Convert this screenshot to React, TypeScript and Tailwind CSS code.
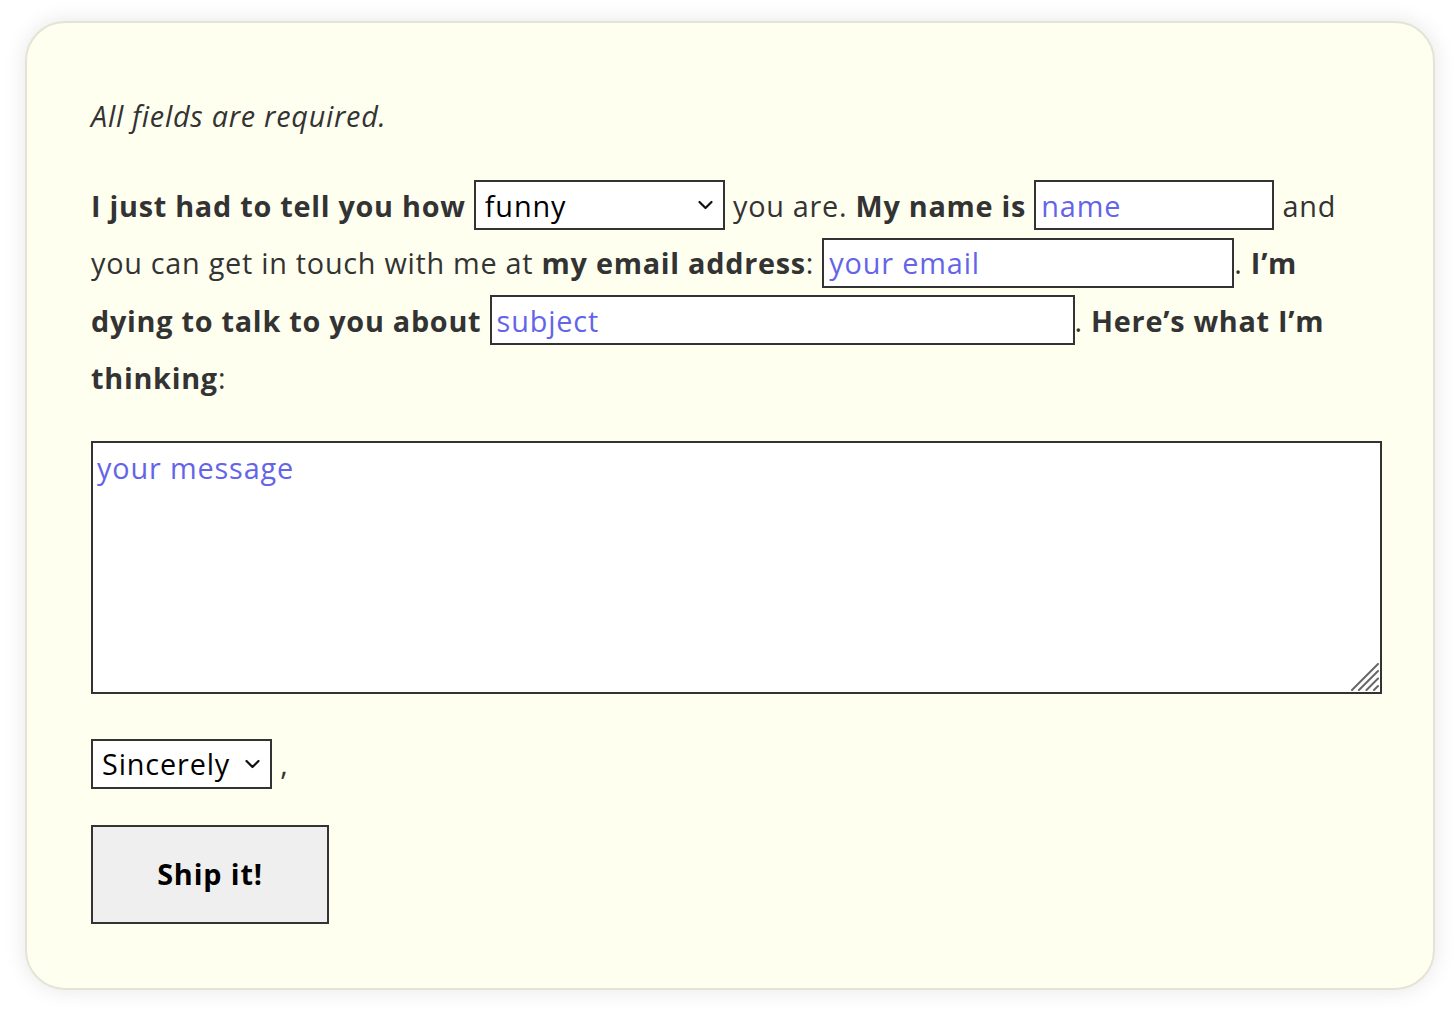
import React from 'react';

const inputCls =
    "inline-block h-[50px] border-2 border-[#333] bg-white px-[5px] text-[28.8px] leading-none tracking-[0.03em] text-[#333] outline-none placeholder:text-[#6464e8]";

function Chevron() {
    return (
        <svg width="15" height="9" viewBox="0 0 15 9" fill="none" className="pointer-events-none absolute top-1/2 -translate-y-1/2 right-[12px]">
            <polyline points="1.5,1.5 7.5,7.5 13.5,1.5" stroke="#111" strokeWidth="2.2" strokeLinecap="round" strokeLinejoin="round" />
        </svg>
    );
}

function InlineSelect({ width, options }: { width: string; options: string[] }) {
    return (
        <span className="relative inline-block">
            <select
                className={`${width} h-[50px] appearance-none border-2 border-[#333] bg-white py-0 pl-[9px] text-[28.8px] leading-[1.3] tracking-[0.03em] text-black outline-none`}
                defaultValue={options[0]}
            >
                {options.map((o) => (
                    <option key={o}>{o}</option>
                ))}
            </select>
            <Chevron />
        </span>
    );
}

export default function App() {
    return (
        <div className="min-h-screen bg-white pt-[21px] pb-[22px] font-['Open_Sans',sans-serif] tracking-[0.046em] text-[#333]">
            <form className="ml-[25px] w-[1410px] rounded-[40px] border-2 border-[#e4e4d6] bg-[#fffff0] p-16 shadow-[0_0_22px_rgba(0,0,0,0.10)]">
                <p className="text-[28.8px] leading-[2] italic">All fields are required.</p>

                <p className="mt-8 text-[28.8px] leading-[2]">
                    <b>I just had to tell you how</b>{' '}
                    <InlineSelect width="w-[251px]" options={['funny', 'smart', 'kind', 'brave']} /> you are.{' '}
                    <b>My name is</b> <input className={`${inputCls} w-[240px]`} placeholder="name" /> and
                    <br />
                    you can get in touch with me at <b>my email address</b>:{' '}
                    <input className={`${inputCls} w-[412px]`} placeholder="your email" />. <b>I’m</b>
                    <br />
                    <b>dying to talk to you about</b>{' '}
                    <input className={`${inputCls} w-[585px]`} placeholder="subject" />. <b>Here’s what I’m</b>
                    <br />
                    <b>thinking</b>:
                </p>

                {/* Message */}
                <div className="relative mt-[34px] w-[1291px]">
                    <textarea
                        className="block h-[253px] w-full resize-none border-2 border-[#333] bg-white px-[4px] py-[2px] text-[28.8px] leading-[1.6] tracking-[0.03em] text-[#333] outline-none placeholder:text-[#6464e8]"
                        placeholder="your message"
                    />
                    <svg width="28" height="28" viewBox="0 0 28 28" className="pointer-events-none absolute right-[3px] bottom-[3px]">
                        <g stroke="#666" strokeWidth="2" strokeLinecap="round">
                            <line x1="1" y1="27" x2="27" y2="1" />
                            <line x1="8" y1="27" x2="27" y2="8" />
                            <line x1="15.5" y1="27" x2="27" y2="15.5" />
                            <line x1="23" y1="27" x2="27" y2="23" />
                        </g>
                    </svg>
                </div>

                <p className="mt-[41px] text-[28.8px] leading-[2]">
                    <InlineSelect width="w-[181px]" options={['Sincerely', 'Cheers', 'Warmly']} /> ,
                </p>

                <button
                    type="button"
                    className="mt-8 block h-[99px] w-[238px] border-2 border-[#333] bg-[#efefef] text-[28.8px] font-bold tracking-[0.03em] text-black"
                >
                    Ship it!
                </button>
            </form>
        </div>
    );
}
